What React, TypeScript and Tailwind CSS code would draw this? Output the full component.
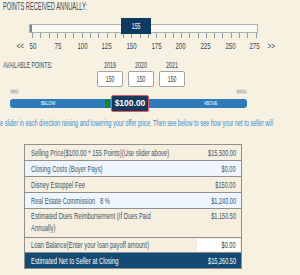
import React from "react";

const SCALE = [50, 75, 100, 125, 150, 175, 200, 225, 250, 275];
const YEARS = ["2019", "2020", "2021"];

const ROWS = [
  { label: "Selling Price($100.00 * 155 Points)(Use slider above)", value: "$15,500.00", bg: "bg-[#f6efdf]" },
  { label: "Closing Costs (Buyer Pays)", value: "$0.00", bg: "bg-[#eef5fc]" },
  { label: "Disney Estoppel Fee", value: "$150.00", bg: "bg-[#f6efdf]" },
  { label: "Real Estate Commission\u00a0\u00a0\u00a08 %", value: "$1,240.00", bg: "bg-[#eef5fc]" },
];

// the page uses a very condensed face; squeeze Arial-width text to match
function Narrow({ children, className }: { children: React.ReactNode; className: string }) {
  return <span className={`inline-block whitespace-nowrap ${className}`}>{children}</span>;
}

export default function App() {
  return (
    <div className="w-[300px] h-[275px] overflow-hidden bg-[#f7f1e1] text-[#36495b] font-['Liberation_Sans',Arial,sans-serif]">
      {/* Points received */}
      <div className="pt-[2px] pl-[3px] h-[12px] text-[10px] leading-[10px] uppercase">
        <Narrow className="origin-left scale-x-[0.57]">Points Received Annually:</Narrow>
      </div>

      <div className="relative mt-[12px] ml-[29px] w-[229px] h-[9px] bg-[#fbf8f1] border border-[#a9b2ba]">
        <div className="absolute left-0 top-0 w-[2px] h-full bg-[#7b8894]" />
        <div className="absolute left-[91px] top-[-7px] w-[30px] h-[16px] bg-[#0f3a60] text-white text-[8.5px] leading-[16px] text-center">
          <Narrow className="scale-x-[0.62]">155</Narrow>
        </div>
      </div>

      <div className="ml-[32px] w-[225px] h-[5px] flex justify-between">
        {Array.from({ length: 28 }).map((_, i) => (
          <div key={i} className="w-px h-full bg-[#8e9aa5]" />
        ))}
      </div>

      <div className="mt-[4px] h-[9px] flex items-center text-[9px] leading-[9px]">
        <span className="ml-[15px] w-[8px] text-center">
          <Narrow className="scale-x-[0.7]">&lt;&lt;</Narrow>
        </span>
        <div className="w-[242px] flex justify-between">
          {SCALE.map((n) => (
            <span key={n} className="w-[20px] text-center">
              <Narrow className="scale-x-[0.68]">{n}</Narrow>
            </span>
          ))}
        </div>
        <span className="ml-[1px] w-[8px] text-center">
          <Narrow className="scale-x-[0.7]">&gt;&gt;</Narrow>
        </span>
      </div>

      {/* Available points */}
      <div className="mt-[10px] flex pl-[3px] text-[9px] leading-[9px]">
        <div className="w-[94px] uppercase">
          <Narrow className="origin-left scale-x-[0.575]">Available Points:</Narrow>
        </div>
        <div className="flex gap-[5px]">
          {YEARS.map((y) => (
            <div key={y} className="w-[26px] flex flex-col items-center">
              <Narrow className="scale-x-[0.6]">{y}</Narrow>
              <div className="mt-[1px] w-[26px] h-[16px] bg-white border border-[#a3a3a3] rounded-[2px] text-[8.5px] leading-[14px] text-center text-[#3a3a3a]">
                <Narrow className="scale-x-[0.6]">150</Narrow>
              </div>
            </div>
          ))}
        </div>
      </div>

      {/* Price slider */}
      <div className="mt-[2px] ml-[10px] w-[237px] h-[5px] flex justify-between text-[4px] leading-[5px] text-[#8d8d8d]">
        <span className="bg-[#e4e0d6] px-[1px]">$80</span>
        <span className="bg-[#e4e0d6] px-[1px]">$150</span>
      </div>
      <div className="relative mt-[5px] ml-[10px] w-[237px] h-[9px] rounded-[3px] bg-[#2d7bbb] flex items-center text-[5px] leading-[5px] text-white uppercase">
        <span className="ml-[31px]">
          <Narrow className="origin-left scale-x-[0.78]">Below</Narrow>
        </span>
        <span className="ml-[145px]">
          <Narrow className="origin-left scale-x-[0.78]">Above</Narrow>
        </span>
        <div className="absolute left-[95px] top-0 w-[5px] h-full bg-[#17872b]" />
        <div className="absolute left-[101px] top-[-4px] w-[38px] h-[17px] rounded-[2px] bg-[#17395a] border border-[#e4596a] text-white text-[8.5px] leading-[15px] text-center font-bold">
          $100.00
        </div>
      </div>

      <div className="mt-[11px] h-[9px] text-[9px] leading-[9px] text-[#2f8fd6]">
        <Narrow className="origin-left scale-x-[0.62]">
          e slider in each direction raising and lowering your offer price. Then see below to see how your net to seller will
        </Narrow>
      </div>

      {/* Net to seller table */}
      <div className="mt-[16px] ml-[24px] w-[218px] border border-[#8f8f8f] text-[9px] leading-[12px] text-[#3a556b]">
        {ROWS.map((r) => (
          <div key={r.label} className={`h-[16px] flex items-center border-b border-[#8f8f8f] ${r.bg}`}>
            <div className="min-w-0 flex-1 pl-[6px]">
              <Narrow className="origin-left scale-x-[0.65]">{r.label}</Narrow>
            </div>
            <div className="pr-[5px] text-right">
              <Narrow className="origin-right scale-x-[0.62]">{r.value}</Narrow>
            </div>
          </div>
        ))}
        <div className="h-[29px] pt-[1px] flex items-start border-b border-[#8f8f8f] bg-[#f6efdf]">
          <div className="min-w-0 flex-1 pl-[6px]">
            <Narrow className="origin-left scale-x-[0.65]">
              Estimated Dues Reimbursement (If Dues Paid
              <br />
              Annually)
            </Narrow>
          </div>
          <div className="pr-[5px] text-right">
            <Narrow className="origin-right scale-x-[0.62]">$1,150.50</Narrow>
          </div>
        </div>
        <div className="h-[15px] flex items-center border-b border-[#8f8f8f] bg-[#f6efdf]">
          <div className="min-w-0 flex-1 pl-[6px]">
            <Narrow className="origin-left scale-x-[0.65]">Loan Balance(Enter your loan payoff amount)</Narrow>
          </div>
          <div className="w-[43px] h-[12px] mr-[1px] bg-white text-right pr-[4px] leading-[12px] text-[#333]">
            <Narrow className="origin-right scale-x-[0.62]">$0.00</Narrow>
          </div>
        </div>
        <div className="h-[15px] flex items-center bg-[#124a73] text-white">
          <div className="min-w-0 flex-1 pl-[6px]">
            <Narrow className="origin-left scale-x-[0.65]">Estimated Net to Seller at Closing</Narrow>
          </div>
          <div className="pr-[5px]">
            <Narrow className="origin-right scale-x-[0.62]">$15,260.50</Narrow>
          </div>
        </div>
      </div>
    </div>
  );
}
